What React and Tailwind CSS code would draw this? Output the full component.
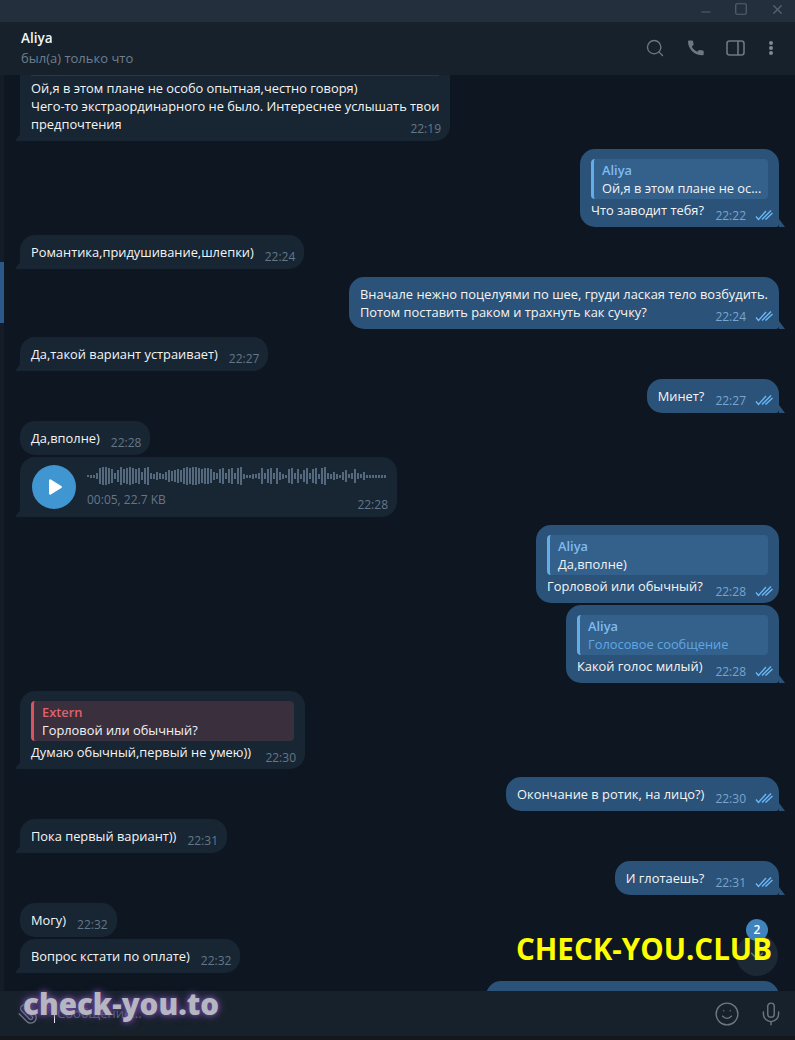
import React from "react";
import { Paperclip, Search, Smile, Mic, ChevronDown, Minus, Square, X } from "lucide-react";

const Ticks = () => (
  <svg width="18" height="12" viewBox="0 0 18 12" fill="none" stroke="#6ab8f7" strokeWidth="1.4" className="ml-[9px] mb-[2px]">
    <path d="M1 7.5l2.5 3L11 2" />
    <path d="M7 10.5L16 1.5" />
    <path d="M10.5 10.5L17.5 4" />
  </svg>
);

const Reply = ({ name, text, red, blue }) => (
  <div
    className={`flex h-[40px] flex-col rounded-[4px] border-l-[3px] px-[8px] pt-[2px] mb-[2px] text-[12.85px] leading-[18px] ${
      red ? "border-[#d9545f] bg-[#3a2f3d]" : "border-[#64aee8] bg-[#34608c]"
    }`}
  >
    <span className={`font-semibold ${red ? "text-[#e0626c]" : "text-[#7dbcf0]"}`}>{name}</span>
    <span className={`whitespace-nowrap ${blue ? "text-[#5fa8e4]" : "text-[#f0f4f8]"}`}>{text}</span>
  </div>
);

const Time = ({ t, out, multi, reply }) => (
  <div
    className={`flex h-[16px] shrink-0 items-center ${
      multi
        ? `absolute bottom-[4px] ${out ? "right-[6px]" : "right-[9px]"}`
        : `ml-[11px] self-end ${reply ? "mb-[-5px]" : "mb-[-4px]"} ${out ? "mr-[-5px]" : "mr-[-2px]"}`
    }`}
  >
    <span className={`text-[12px] leading-[16px] ${out ? "text-[#7aa5cf]" : "text-[#64778a]"}`}>{t}</span>
    {out && <Ticks />}
  </div>
);

const Bubble = ({ out, tail, t, children, reply, w, gap, multi, top }) => (
  <div className={`relative flex shrink-0 ${out ? "justify-end" : "justify-start"} ${gap ? "mt-[2px]" : "mt-[8px]"}`}>
    <div
      className={`relative rounded-[15px] px-[11px] text-[12.85px] leading-[18px] text-[#f5f5f5] ${
        out ? "bg-[#2b5278]" : "bg-[#182533]"
      } ${reply ? "pt-[10px] pb-[8px]" : "py-[8px]"} ${w || ""} ${tail ? (out ? "rounded-br-[3px]" : "rounded-bl-[3px]") : ""}`}
    >
      {top}
      {reply}
      <div className="flex justify-between">
        <span className="whitespace-pre">{children}</span>
        <Time t={t} out={out} multi={multi} reply={!!reply} />
      </div>
      {tail && (
        <div
          className={`absolute bottom-0 h-[8px] w-[6px] ${
            out
              ? "right-[-6px] bg-[#2b5278] [clip-path:polygon(0_0,100%_100%,0_100%)]"
              : "left-[-5px] bg-[#182533] [clip-path:polygon(100%_0,100%_100%,0_100%)]"
          }`}
        />
      )}
    </div>
  </div>
);

// bar heights read from the voice message, 100 bars of 2px + 1px gap
const wave = [
  2,3,3,6,16,18,18,16,14,6,12,18,14,16,18,16,14,16,8,16,18,6,5,8,6,5,8,12,10,12,
  14,12,16,18,16,18,18,16,14,16,16,14,8,6,14,16,6,14,16,6,16,18,5,3,3,5,4,6,16,6,
  14,16,6,16,8,5,3,14,16,6,14,5,12,16,6,14,16,5,16,18,6,5,8,5,3,8,12,4,6,14,6,4,8,3,3,3,3,3,3,3,
];

const Voice = () => (
  <div className="relative mt-[2px] flex shrink-0">
    <div className="relative flex h-[60px] w-[377px] rounded-[15px] rounded-bl-[3px] bg-[#182533] pl-[12px] pt-[8px]">
      <div className="flex h-[44px] w-[44px] shrink-0 items-center justify-center rounded-full bg-[#3f96d0]">
        <svg width="16" height="18" viewBox="0 0 16 18" className="ml-[2px]">
          <path d="M2 2.5v13a1.2 1.2 0 0 0 1.8 1l10.5-6.5a1.2 1.2 0 0 0 0-2L3.8 1.5A1.2 1.2 0 0 0 2 2.5z" fill="#fff" />
        </svg>
      </div>
      <div className="ml-[11px] flex flex-col">
        <div className="mt-[1px] flex h-[20px] items-center gap-[1px]">
          {wave.map((h, i) => (
            <div key={i} className="w-[2px] bg-[#54697e]" style={{ height: h }} />
          ))}
        </div>
        <span className="mt-[6px] text-[12px] leading-[16px] text-[#64778a]">00:05, 22.7 KB</span>
      </div>
      <span className="absolute bottom-[4px] right-[9px] text-[12px] leading-[16px] text-[#64778a]">22:28</span>
      <div className="absolute bottom-0 left-[-5px] h-[8px] w-[6px] bg-[#182533] [clip-path:polygon(100%_0,100%_100%,0_100%)]" />
    </div>
  </div>
);

export default function App() {
  return (
    <div className="relative flex h-[1040px] w-[795px] flex-col overflow-hidden bg-[#0e1621] [font-family:'Open_Sans',sans-serif]">
      {/* title bar */}
      <div className="flex h-[22px] shrink-0 items-center justify-end bg-[#242f3d] text-[#56636f]">
        <Minus size={14} className="mr-[21px] mt-[2px]" />
        <Square size={14} className="mr-[22px] mb-[4px]" />
        <X size={15} className="mr-[10px] mb-[4px]" />
      </div>

      {/* chat header */}
      <div className="flex h-[53px] shrink-0 items-center justify-between bg-[#17212b] pb-[2px] pl-[21px] pr-[22px]">
        <div className="flex flex-col">
          <span className="text-[13.5px] font-semibold leading-[18px] text-[#f5f5f5]">Aliya</span>
          <span className="mt-[2px] text-[13px] leading-[18px] text-[#6d7f8f]">был(а) только что</span>
        </div>
        <div className="flex items-center text-[#6d7883]">
          <Search size={20} strokeWidth={1.6} />
          <svg width="17" height="16" viewBox="0 0 17 16" fill="currentColor" className="ml-[22px]">
            <path d="M2 .5h3a1 1 0 0 1 1 .8l.6 3a1 1 0 0 1-.4 1L4.800 6.500c1 2.300 3 4.200 5.500 5.200l1-1.300a1 1 0 0 1 1-.4l3.600.6a1 1 0 0 1 .8 1v2.600a1 1 0 0 1-1 1.100C7.500 15.500 1 9 1 1.500a1 1 0 0 1 1-1z" />
          </svg>
          <svg width="19" height="16" viewBox="0 0 19 16" fill="none" stroke="currentColor" strokeWidth="1.6" className="ml-[22px]">
            <rect x="1" y="1" width="17" height="14" rx="2.5" />
            <path d="M12 1v14" />
          </svg>
          <div className="ml-[24px] flex flex-col gap-[1px] text-[#7d8993]">
            <div className="h-[4px] w-[4px] rounded-full bg-current" />
            <div className="h-[4px] w-[4px] rounded-full bg-current" />
            <div className="h-[4px] w-[4px] rounded-full bg-current" />
          </div>
        </div>
      </div>

      {/* messages */}
      <div className="relative flex min-h-0 flex-1 overflow-hidden bg-[#0e1621]">
        <div className="relative w-[4px] shrink-0 bg-[#131c27]">
          <div className="absolute left-0 top-[187px] h-[61px] w-[4px] bg-[#2b5a8a]" />
        </div>
        <div className="flex min-w-0 flex-1 flex-col px-[16px]">
          <Bubble
            tail
            multi
            t="22:19"
            w="mt-[-34px] h-[92px] w-[430px] !pt-[30px]"
            top={<div className="absolute left-[11px] right-[11px] top-[26px] h-[1px] bg-[#2a3644]" />}
          >
            {"Ой,я в этом плане не особо опытная,честно говоря)\nЧего-то экстраординарного не было. Интереснее услышать твои\nпредпочтения"}
          </Bubble>
          <Bubble out tail t="22:22" w="w-[199px]" reply={<Reply name="Aliya" text="Ой,я в этом плане не ос..." />}>
            Что заводит тебя?
          </Bubble>
          <Bubble tail t="22:24">Романтика,придушивание,шлепки)</Bubble>
          <Bubble out tail multi t="22:24" w="w-[430px]">
            {"Вначале нежно поцелуями по шее, груди лаская тело возбудить.\nПотом поставить раком и трахнуть как сучку?"}
          </Bubble>
          <Bubble tail t="22:27">Да,такой вариант устраивает)</Bubble>
          <Bubble out tail t="22:27">Минет?</Bubble>
          <Bubble t="22:28">Да,вполне)</Bubble>
          <Voice />
          <Bubble out t="22:28" w="w-[243px]" reply={<Reply name="Aliya" text="Да,вполне)" />}>
            Горловой или обычный?
          </Bubble>
          <Bubble out tail gap t="22:28" w="w-[213px]" reply={<Reply name="Aliya" text="Голосовое сообщение" blue />}>
            Какой голос милый)
          </Bubble>
          <Bubble tail t="22:30" w="w-[285px]" reply={<Reply name="Extern" text="Горловой или обычный?" red />}>
            Думаю обычный,первый не умею))
          </Bubble>
          <Bubble out tail t="22:30">Окончание в ротик, на лицо?)</Bubble>
          <Bubble tail t="22:31">Пока первый вариант))</Bubble>
          <Bubble out tail t="22:31">И глотаешь?</Bubble>
          <Bubble t="22:32">Могу)</Bubble>
          <Bubble tail gap t="22:32">Вопрос кстати по оплате)</Bubble>
          <div className="mt-[8px] ml-auto h-[34px] w-[293px] shrink-0 rounded-[15px] bg-[#2b5278]" />
        </div>

        {/* scroll down button */}
        <div className="absolute left-[736px] top-[859px] flex h-[42px] w-[42px] items-center justify-center rounded-full bg-[#1c2833] text-[#6d7883]">
          <ChevronDown size={22} strokeWidth={1.6} className="mt-[2px]" />
        </div>
        <div className="absolute left-[746px] top-[844px] flex h-[22px] w-[22px] items-center justify-center rounded-full bg-[#4082bc] text-[12px] font-semibold text-white">
          2
        </div>
      </div>

      {/* composer */}
      <div className="flex h-[45px] shrink-0 items-center bg-[#17212b] pl-[17px] pr-[11px] text-[#6d7883]">
        <Paperclip size={22} strokeWidth={1.5} className="-scale-x-100" />
        <div className="ml-[15px] h-[18px] w-[1px] bg-[#f5f5f5]" />
        <span className="ml-[2px] text-[13px] text-[#5a6b7a]">Сообщение...</span>
        <Smile size={26} strokeWidth={1.3} className="ml-auto" />
        <Mic size={26} strokeWidth={1.3} className="ml-[18px]" />
      </div>
      <div className="h-[4px] shrink-0 bg-[#14181c]" />

      {/* watermarks */}
      <div className="absolute left-[23px] top-[986px] text-[29.5px] font-extrabold leading-[36px] text-[#b4b6c0] [text-shadow:0_0_10px_#6d4a9c,0_0_5px_#6d4a9c]">
        check-you.to
      </div>
      <div className="absolute left-[516px] top-[931px] text-[29.5px] font-bold leading-[36px] text-[#ffff00]">
        CHECK-YOU.CLUB
      </div>
    </div>
  );
}
